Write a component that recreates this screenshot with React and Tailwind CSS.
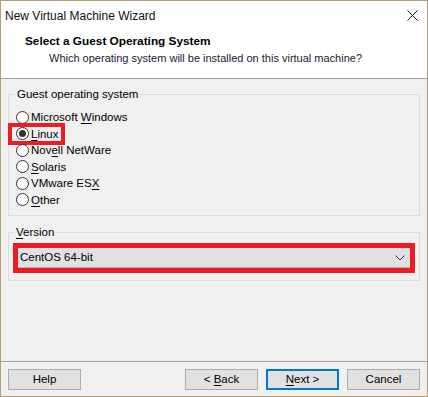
import React from 'react';

const font = { fontFamily: '"Liberation Sans", Arial, sans-serif' };

const options = [
    { label: 'Microsoft Windows', key: 'W', pre: 'Microsoft ', post: 'indows' },
    { label: 'Linux', pre: '', key: 'L', post: 'inux' },
    { label: 'Novell NetWare', pre: 'Nov', key: 'e', post: 'll NetWare' },
    { label: 'Solaris', pre: '', key: 'S', post: 'olaris' },
    { label: 'VMware ESX', pre: 'VMware ES', key: 'X', post: '' },
    { label: 'Other', pre: '', key: 'O', post: 'ther' },
];

const Radio = ({ checked }) => (
    <span className="w-[13px] h-[13px] rounded-full border border-[#333] bg-white flex items-center justify-center shrink-0">
        {checked && <span className="w-[7px] h-[7px] rounded-full bg-[#333]" />}
    </span>
);

const Button = ({ children, primary }) => (
    <button
        className={
            primary
                ? 'w-[73px] h-[21px] bg-[#e1e1e1] border-2 border-[#0078d7] text-[11.5px] text-black flex items-center justify-center'
                : 'w-[73px] h-[21px] bg-[#e1e1e1] border border-[#adadad] text-[11.5px] text-black flex items-center justify-center'
        }
    >
        {children}
    </button>
);

const App = () => {
    return (
        <div style={font} className="w-[428px] h-[397px] border border-[#b59d77] bg-[#f0f0f0] flex flex-col text-[11.5px] text-black overflow-hidden">
            {/* title bar */}
            <div className="h-[29px] bg-white flex items-center justify-between pl-[4px] pr-[9px]">
                <span className="text-[12px] text-[#111]">New Virtual Machine Wizard</span>
                <svg width="11" height="11" viewBox="0 0 11 11">
                    <path d="M0.5 0.5 L10.5 10.5 M10.5 0.5 L0.5 10.5" stroke="#111" strokeWidth="1" />
                </svg>
            </div>
            {/* header */}
            <div className="h-[49px] bg-white border-b border-[#a0a0a0] pl-[24px] pt-[3px]">
                <div className="font-bold text-[11.8px] leading-[17px]">Select a Guest Operating System</div>
                <div className="pl-[24px] text-[11px] leading-[17px] text-[#1a1a3a]">Which operating system will be installed on this virtual machine?</div>
            </div>

            <div className="flex-1 px-[7px] pt-[8px]">
                {/* guest os group */}
                <fieldset className="border border-[#dcdcdc] px-[7px] pb-[8px] h-[129px]">
                    <legend className="px-[2px] -ml-[1px] leading-[14px]">Guest operating system</legend>
                    <div className="flex flex-col mt-[8px]">
                        {options.map((o, i) => (
                            <div key={o.label} className="h-[16.5px] flex items-center">
                                <div className={i === 1 ? 'flex items-center gap-[2px] outline-[4px] outline-[#ed1c24] -outline-offset-[4px] h-[22px] w-[57px] -ml-[8px] pl-[8px] -my-[3px]' : 'flex items-center gap-[2px]'}>
                                    <Radio checked={i === 1} />
                                    <span className="leading-[14px]">
                                        {o.pre}
                                        <span className="underline underline-offset-2">{o.key}</span>
                                        {o.post}
                                    </span>
                                </div>
                            </div>
                        ))}
                    </div>
                </fieldset>

                {/* version group */}
                <fieldset className="border border-[#dcdcdc] px-[4px] mt-[9px] h-[56px]">
                    <legend className="px-[2px] ml-[1px] leading-[14px]">
                        <span className="underline underline-offset-2">V</span>ersion
                    </legend>
                    <div className="mt-[4px] border-[5px] border-[#ed1c24] h-[30px]">
                        <div className="h-full bg-[#e1e1e1] border-b border-[#b4b4b4] flex items-center justify-between pl-[2px] pr-[5px]">
                            <span>CentOS 64-bit</span>
                            <svg width="10" height="6" viewBox="0 0 10 6">
                                <path d="M0.5 0.5 L5 5 L9.5 0.5" fill="none" stroke="#444" strokeWidth="1" />
                            </svg>
                        </div>
                    </div>
                </fieldset>
            </div>

            {/* footer */}
            <div className="h-[35px] border-t border-[#a0a0a0] flex items-start pt-[7px] px-[7px]">
                <Button>Help</Button>
                <div className="flex-1" />
                <div className="flex gap-[8px]">
                    <Button>
                        &lt;&nbsp;<span className="underline underline-offset-2">B</span>ack
                    </Button>
                    <Button primary>
                        <span className="underline underline-offset-2">N</span>ext &gt;
                    </Button>
                    <Button>Cancel</Button>
                </div>
            </div>
        </div>
    );
};

export default App;
